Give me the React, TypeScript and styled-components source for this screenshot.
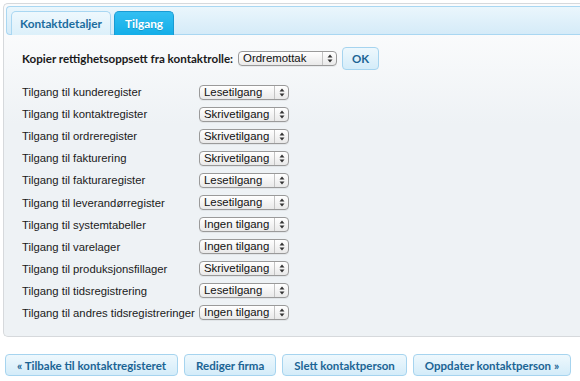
import React from "react";
import styled, { createGlobalStyle } from "styled-components";

const Global = createGlobalStyle`
  html, body { margin: 0; padding: 0; background: #ffffff; }
  body { font-family: "Liberation Sans", Arial, sans-serif; font-size: 11.3px; color: #1a1a1a; }
  * { box-sizing: border-box; }
`;

const boldFont = `Lato, "Liberation Sans", Arial, sans-serif`;

const Page = styled.div`
  width: 580px;
  height: 381px;
  padding: 3px 0 0 3px;
  display: flex;
  flex-direction: column;
`;

const Panel = styled.div`
  height: 334px;
  border: 1px solid #d6d9dc;
  border-right: none;
  border-radius: 5px 0 0 5px;
  padding: 2px 0 0 2px;
  background: linear-gradient(#fafbfc 30px, #eef2f5 120px);
  display: flex;
  flex-direction: column;
`;

const TabBar = styled.div`
  height: 29px;
  border: 1px solid #a9d7f2;
  border-right: none;
  border-radius: 4px 0 0 4px;
  background: linear-gradient(#eaf6fc, #d5ebf8);
  display: flex;
  align-items: flex-end;
  gap: 3px;
  padding-left: 4px;
`;

const Tab = styled.div<{ $active?: boolean }>`
  height: 24px;
  padding: 0 ${(p) => (p.$active ? 10 : 8)}px;
  margin-bottom: -1px;
  display: flex;
  align-items: center;
  font-family: ${boldFont};
  font-weight: bold;
  font-size: 11.8px;
  border: 1px solid ${(p) => (p.$active ? "#1a9bd3" : "#a9d7f2")};
  border-bottom: none;
  border-radius: 5px 5px 0 0;
  color: ${(p) => (p.$active ? "#ffffff" : "#1b6c9e")};
  background: ${(p) =>
    p.$active
      ? "linear-gradient(#33bff2, #14aee8)"
      : "linear-gradient(#eef8fd, #dcf0fa)"};
  text-shadow: ${(p) => (p.$active ? "0 1px 0 rgba(0,0,0,0.15)" : "none")};
`;

const Body = styled.div`
  padding: 11px 0 0 16px;
  display: flex;
  flex-direction: column;
`;

const CopyRow = styled.div`
  display: flex;
  align-items: center;
  height: 24px;
  margin-bottom: 11px;
`;

const CopyLabel = styled.span`
  font-family: ${boldFont};
  font-weight: bold;
  font-size: 11.6px;
  margin-right: 5px;
`;

const Rows = styled.div`
  display: flex;
  flex-direction: column;
`;

const Row = styled.div`
  display: flex;
  align-items: center;
  height: 22.1px;
`;

const RowLabel = styled.span`
  min-width: 177px;
  padding-right: 2px;
  flex: none;
  white-space: nowrap;
`;

const Select = styled.div<{ $w: number }>`
  width: ${(p) => p.$w}px;
  height: 15px;
  border: 1px solid #9a9a9a;
  border-radius: 4px;
  background: linear-gradient(#ffffff, #e9e9e9);
  display: flex;
  align-items: stretch;
  font-size: 11.4px;
  line-height: 13px;
  box-shadow: 0 1px 0 rgba(0,0,0,0.05);
  flex: none;
`;

const SelectText = styled.span`
  flex: 1;
  padding-left: 4px;
  white-space: nowrap;
  overflow: hidden;
  color: #111;
`;

const SelectArrow = styled.span`
  width: 14px;
  border-left: 1px solid #c3c3c3;
  display: flex;
  align-items: center;
  justify-content: center;
`;

const BlueButton = styled.div`
  height: 22px;
  padding: 0 11px;
  border: 1px solid #a6d4ef;
  border-radius: 4px;
  background: linear-gradient(#eef8fd, #d4ecf9);
  color: #1b6494;
  font-family: ${boldFont};
  font-weight: bold;
  font-size: 11.5px;
  display: flex;
  align-items: center;
  justify-content: center;
  white-space: nowrap;
`;

const OkButton = styled(BlueButton)`
  margin-left: 5px;
  width: 37px;
  height: 23px;
  padding: 0;
`;

const Footer = styled.div`
  display: flex;
  gap: 6px;
  margin-top: 17px;
  padding-left: 2px;
`;

const Arrows = () => (
  <svg width="6" height="9" viewBox="0 0 6 9">
    <path d="M3 0.5 L5.5 3.5 L0.5 3.5 Z" fill="#333" />
    <path d="M3 8.5 L5.5 5.5 L0.5 5.5 Z" fill="#333" />
  </svg>
);

const Dropdown = ({ value, width }: { value: string; width: number }) => (
  <Select $w={width}>
    <SelectText>{value}</SelectText>
    <SelectArrow>
      <Arrows />
    </SelectArrow>
  </Select>
);

const rows: [string, string][] = [
  ["Tilgang til kunderegister", "Lesetilgang"],
  ["Tilgang til kontaktregister", "Skrivetilgang"],
  ["Tilgang til ordreregister", "Skrivetilgang"],
  ["Tilgang til fakturering", "Skrivetilgang"],
  ["Tilgang til fakturaregister", "Lesetilgang"],
  ["Tilgang til leverandørregister", "Lesetilgang"],
  ["Tilgang til systemtabeller", "Ingen tilgang"],
  ["Tilgang til varelager", "Ingen tilgang"],
  ["Tilgang til produksjonsfillager", "Skrivetilgang"],
  ["Tilgang til tidsregistrering", "Lesetilgang"],
  ["Tilgang til andres tidsregistreringer", "Ingen tilgang"],
];

export default function App() {
  return (
    <Page>
      <Global />
      <Panel>
        <TabBar>
          <Tab>Kontaktdetaljer</Tab>
          <Tab $active>Tilgang</Tab>
        </TabBar>
        <Body>
          <CopyRow>
            <CopyLabel>Kopier rettighetsoppsett fra kontaktrolle:</CopyLabel>
            <Dropdown value="Ordremottak" width={99} />
            <OkButton>OK</OkButton>
          </CopyRow>
          <Rows>
            {rows.map(([label, value]) => (
              <Row key={label}>
                <RowLabel>{label}</RowLabel>
                <Dropdown value={value} width={90} />
              </Row>
            ))}
          </Rows>
        </Body>
      </Panel>
      <Footer>
        <BlueButton>« Tilbake til kontaktregisteret</BlueButton>
        <BlueButton>Rediger firma</BlueButton>
        <BlueButton>Slett kontaktperson</BlueButton>
        <BlueButton>Oppdater kontaktperson »</BlueButton>
      </Footer>
    </Page>
  );
}
